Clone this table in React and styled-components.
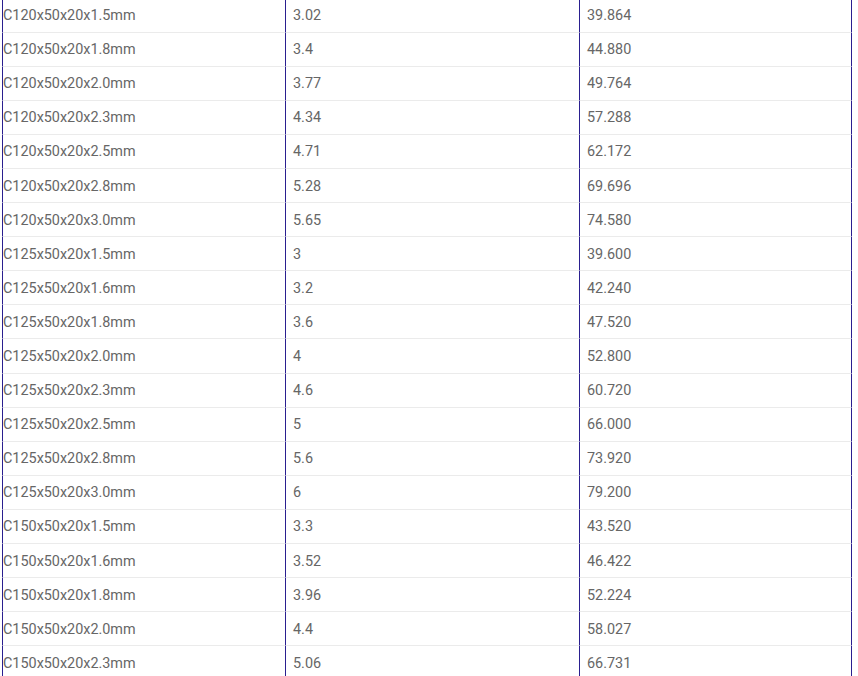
import styled, { createGlobalStyle } from 'styled-components';

const GlobalStyle = createGlobalStyle`
  html, body {
    margin: 0;
    padding: 0;
    background: #fff;
  }
  body {
    font-family: Roboto, "Liberation Sans", Arial, sans-serif;
  }
`;

const Wrapper = styled.div`
  padding-left: 2px;
  margin-top: -1.5px;
  width: 850px;
`;

const Table = styled.table`
  width: 100%;
  border-collapse: separate;
  border-spacing: 0;
  table-layout: fixed;
  font-size: 14.4px;
  color: #666;
`;

const Cell = styled.td`
  height: 34.1px;
  padding: 2px ${(p) => (p.$first ? '0' : '7px')} 0;
  border-left: 1px solid #2a1f8f;
  border-right: ${(p) => (p.$last ? '1px solid #2a1f8f' : 'none')};
  border-bottom: 1px solid #ebebeb;
  line-height: 20px;
  vertical-align: middle;
  white-space: nowrap;
  box-sizing: border-box;
`;

// spec, weight per metre, weight per 6m piece
const rows = [
  ['C120x50x20x1.5mm', '3.02', '39.864'],
  ['C120x50x20x1.8mm', '3.4', '44.880'],
  ['C120x50x20x2.0mm', '3.77', '49.764'],
  ['C120x50x20x2.3mm', '4.34', '57.288'],
  ['C120x50x20x2.5mm', '4.71', '62.172'],
  ['C120x50x20x2.8mm', '5.28', '69.696'],
  ['C120x50x20x3.0mm', '5.65', '74.580'],
  ['C125x50x20x1.5mm', '3', '39.600'],
  ['C125x50x20x1.6mm', '3.2', '42.240'],
  ['C125x50x20x1.8mm', '3.6', '47.520'],
  ['C125x50x20x2.0mm', '4', '52.800'],
  ['C125x50x20x2.3mm', '4.6', '60.720'],
  ['C125x50x20x2.5mm', '5', '66.000'],
  ['C125x50x20x2.8mm', '5.6', '73.920'],
  ['C125x50x20x3.0mm', '6', '79.200'],
  ['C150x50x20x1.5mm', '3.3', '43.520'],
  ['C150x50x20x1.6mm', '3.52', '46.422'],
  ['C150x50x20x1.8mm', '3.96', '52.224'],
  ['C150x50x20x2.0mm', '4.4', '58.027'],
  ['C150x50x20x2.3mm', '5.06', '66.731'],
];

function App() {
  return (
    <>
      <GlobalStyle />
      <Wrapper>
        <Table>
          <colgroup>
            <col style={{ width: 283 }} />
            <col style={{ width: 294 }} />
            <col />
          </colgroup>
          <tbody>
            {rows.map((r) => (
              <tr key={r[0]}>
                <Cell $first>{r[0]}</Cell>
                <Cell>{r[1]}</Cell>
                <Cell $last>{r[2]}</Cell>
              </tr>
            ))}
          </tbody>
        </Table>
      </Wrapper>
    </>
  );
}

export default App;
